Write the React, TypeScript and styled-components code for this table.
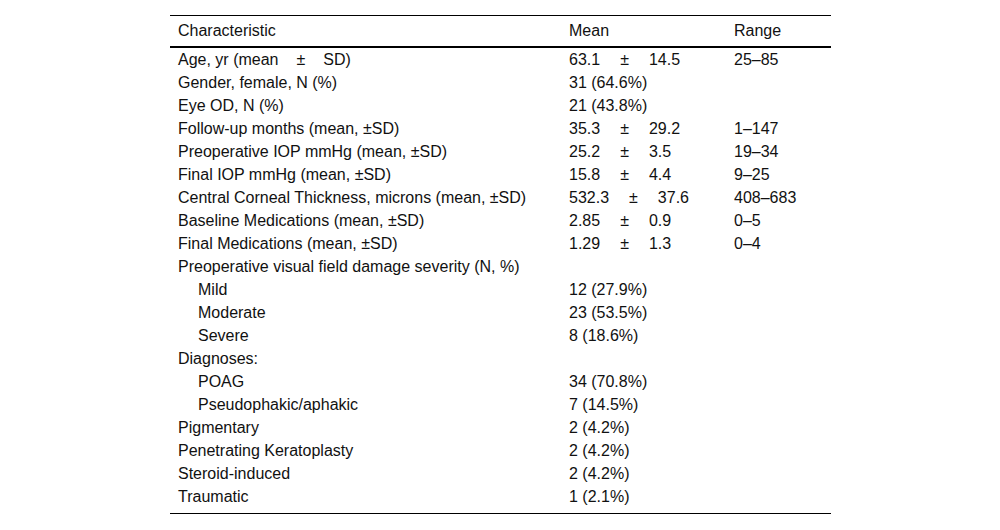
import React from "react";
import styled, { createGlobalStyle } from "styled-components";

const Global = createGlobalStyle`
  html, body { margin: 0; padding: 0; background: #fff; }
  body { font-family: "Liberation Sans", Arial, sans-serif; color: #111; }
`;

const Page = styled.div`
  width: 1000px;
  height: 530px;
  padding: 15px 0 0 170px;
  box-sizing: border-box;
  display: flex;
  align-items: flex-start;
`;

const Table = styled.div`
  width: 661px;
  border-top: 1px solid #000;
  border-bottom: 1px solid #000;
  padding-bottom: 5px;
  font-size: 16px;
`;

const Row = styled.div<{ $head?: boolean }>`
  display: grid;
  grid-template-columns: 391px 165px 105px;
  height: ${(p) => (p.$head ? "30px" : "23px")};
  line-height: ${(p) => (p.$head ? "30px" : "23px")};
  border-bottom: ${(p) => (p.$head ? "2px solid #000" : "none")};
  white-space: nowrap;
`;

const Cell = styled.div<{ $indent?: boolean }>`
  padding-left: ${(p) => (p.$indent ? "28px" : "8px")};
`;

const Pm = styled.span<{ $gap?: number }>`
  margin: 0 ${(p) => p.$gap ?? 20}px;
`;

type R = {
  label: React.ReactNode;
  indent?: boolean;
  mean?: React.ReactNode;
  range?: string;
};

const pm = (a: string, b: string, gap?: number) => (
  <>
    {a}
    <Pm $gap={gap}>±</Pm>
    {b}
  </>
);

const rows: R[] = [
  { label: pm("Age, yr (mean", "SD)", 18), mean: pm("63.1", "14.5"), range: "25–85" },
  { label: "Gender, female, N (%)", mean: "31 (64.6%)" },
  { label: "Eye OD, N (%)", mean: "21 (43.8%)" },
  { label: "Follow-up months (mean, ±SD)", mean: pm("35.3", "29.2"), range: "1–147" },
  { label: "Preoperative IOP mmHg (mean, ±SD)", mean: pm("25.2", "3.5"), range: "19–34" },
  { label: "Final IOP mmHg (mean, ±SD)", mean: pm("15.8", "4.4"), range: "9–25" },
  {
    label: "Central Corneal Thickness, microns (mean, ±SD)",
    mean: pm("532.3", "37.6"),
    range: "408–683",
  },
  { label: "Baseline Medications (mean, ±SD)", mean: pm("2.85", "0.9"), range: "0–5" },
  { label: "Final Medications (mean, ±SD)", mean: pm("1.29", "1.3"), range: "0–4" },
  { label: "Preoperative visual field damage severity (N, %)" },
  { label: "Mild", indent: true, mean: "12 (27.9%)" },
  { label: "Moderate", indent: true, mean: "23 (53.5%)" },
  { label: "Severe", indent: true, mean: "8 (18.6%)" },
  { label: "Diagnoses:" },
  { label: "POAG", indent: true, mean: "34 (70.8%)" },
  { label: "Pseudophakic/aphakic", indent: true, mean: "7 (14.5%)" },
  { label: "Pigmentary", mean: "2 (4.2%)" },
  { label: "Penetrating Keratoplasty", mean: "2 (4.2%)" },
  { label: "Steroid-induced", mean: "2 (4.2%)" },
  { label: "Traumatic", mean: "1 (2.1%)" },
];

export default function App() {
  return (
    <>
      <Global />
      <Page>
        <Table>
          <Row $head>
            <Cell>Characteristic</Cell>
            <Cell>Mean</Cell>
            <Cell>Range</Cell>
          </Row>
          {rows.map((r, i) => (
            <Row key={i}>
              <Cell $indent={r.indent}>{r.label}</Cell>
              <Cell>{r.mean}</Cell>
              <Cell>{r.range}</Cell>
            </Row>
          ))}
        </Table>
      </Page>
    </>
  );
}
